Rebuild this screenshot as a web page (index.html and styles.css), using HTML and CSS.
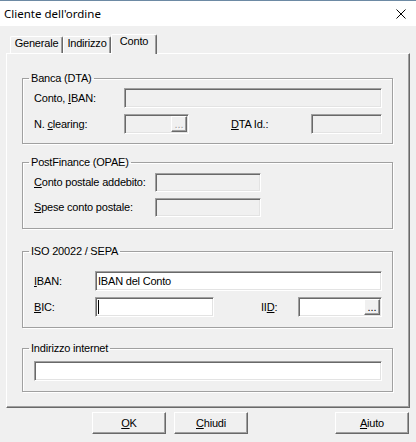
FILE: index.html
```html
<!DOCTYPE html>
<html lang="it">
<head>
<meta charset="utf-8">
<title>Cliente dell'ordine</title>
<link rel="stylesheet" href="styles.css">
</head>
<body>
<div class="window">
  <div class="titlebar">
    <span class="title">Cliente dell'ordine</span>
    <svg class="close" width="10" height="10" viewBox="0 0 10 10"><path d="M0.5 0.5 L9.5 9.5 M9.5 0.5 L0.5 9.5" stroke="#000" stroke-width="1" fill="none"/></svg>
  </div>
  <div class="tabs">
    <div class="tab t-gen">Generale</div>
    <div class="tab t-ind">Indirizzo</div>
    <div class="tab t-con active">Conto</div>
  </div>
  <div class="panel">
    <fieldset class="group g-banca">
      <legend>Banca (DTA)</legend>
      <div class="gbody b-banca">
        <div class="row">
          <span class="lbl l-banca">Conto, <u>I</u>BAN:</span>
          <div class="edit off e-iban-dta"></div>
        </div>
        <div class="row">
          <span class="lbl l-banca">N. <u>c</u>learing:</span>
          <div class="edit off e-clearing"><span class="dots off">...</span></div>
          <span class="lbl l-dta"><u>D</u>TA Id.:</span>
          <div class="edit off e-dta"></div>
        </div>
      </div>
    </fieldset>
    <fieldset class="group g-post">
      <legend>PostFinance (OPAE)</legend>
      <div class="gbody b-post">
        <div class="row">
          <span class="lbl l-post"><u>C</u>onto postale addebito:</span>
          <div class="edit off e-post"></div>
        </div>
        <div class="row">
          <span class="lbl l-post"><u>S</u>pese conto postale:</span>
          <div class="edit off e-post"></div>
        </div>
      </div>
    </fieldset>
    <fieldset class="group g-iso">
      <legend>ISO 20022 / SEPA</legend>
      <div class="gbody b-iso">
        <div class="row">
          <span class="lbl l-iso"><u>I</u>BAN:</span>
          <div class="edit text e-iban">IBAN del Conto</div>
        </div>
        <div class="row">
          <span class="lbl l-iso"><u>B</u>IC:</span>
          <div class="edit text e-bic"><span class="caret"></span></div>
          <span class="lbl l-iid">II<u>D</u>:</span>
          <div class="edit e-iid"><span class="dots">...</span></div>
        </div>
      </div>
    </fieldset>
    <fieldset class="group g-web">
      <legend>Indirizzo internet</legend>
      <div class="gbody b-web">
        <div class="row">
          <div class="edit text e-web"></div>
        </div>
      </div>
    </fieldset>
  </div>
  <div class="buttons">
    <div class="btn"><span><u>O</u>K</span></div>
    <div class="btn"><span><u>C</u>hiudi</span></div>
    <div class="btn help"><span><u>A</u>iuto</span></div>
  </div>
</div>
</body>
</html>
```
FILE: styles.css
```css
* { box-sizing: border-box; }
html, body { margin: 0; padding: 0; }
body {
  background: #f0f0f0;
  font-family: "Liberation Sans", Arial, sans-serif;
  font-size: 11px;
  line-height: 13px;
  letter-spacing: -0.2px;
  color: #000;
}
u { text-decoration: underline; text-underline-offset: 1px; }

.window { width: 416px; height: 442px; background: #f0f0f0; overflow: hidden; }

.titlebar {
  height: 26px;
  border-top: 1px solid #6d8aa4;
  background: #fff;
  display: flex;
  align-items: center;
  justify-content: space-between;
}
.title {
  font-family: "Noto Sans", "Open Sans", sans-serif;
  font-size: 11.5px;
  letter-spacing: 0;
  line-height: 16px;
  padding-left: 4px;
}
.close { display: block; margin-right: 10px; }

/* tabs */
.tabs {
  display: flex;
  align-items: flex-end;
  height: 19px;
  margin: 8px 0 0 10px;
}
.tab {
  height: 17px;
  line-height: 13px;
  text-align: center;
  border-top: 1px solid #fff;
  border-left: 1px solid #fff;
  border-right: 1px solid #696969;
  box-shadow: inset -1px 0 0 #a0a0a0;
  border-radius: 2px 2px 0 0;
  background: #f0f0f0;
}
.t-gen { width: 53px; }
.t-ind { width: 48px; }
.t-con { width: 46px; }
.tab.active {
  height: 20px;
  margin-bottom: -1px;
  position: relative;
  z-index: 1;
}

/* panel */
.panel {
  margin-left: 6px;
  width: 404px;
  height: 355px;
  border-top: 1px solid #fff;
  border-left: 1px solid #fff;
  border-right: 1px solid #696969;
  border-bottom: 1px solid #696969;
  box-shadow: inset -1px -1px 0 #a0a0a0;
  padding: 18px 0 0 15px;
}

.group {
  margin: 0;
  padding: 0;
  width: 371px;
  min-width: 0;
  border: 1px solid #a0a0a0;
  box-shadow: inset 1px 1px 0 #fff, 1px 1px 0 #fff;
}
.group legend {
  margin-left: 6px;
  padding: 0 2px;
  line-height: 13px;
  height: 13px;
}
.g-banca { height: 72px; }
.g-post { height: 73px; margin-top: 12px; }
.g-iso { height: 83px; margin-top: 16px; }
.g-web { height: 50px; margin-top: 14px; }

.gbody { display: flex; flex-direction: column; padding-left: 11px; }
.b-banca { padding-top: 3px; gap: 6px; }
.b-post { padding-top: 4px; gap: 6px; }
.b-iso { padding-top: 13px; gap: 6px; }
.b-web { padding-top: 6px; }

.row { display: flex; align-items: center; }
.lbl { flex: none; white-space: nowrap; }
.l-banca { width: 90px; }
.l-dta { width: 80px; margin-left: 42px; }
.l-post { width: 121px; }
.l-iso { width: 61px; }
.l-iid { width: 37px; margin-left: 47px; }

.edit {
  flex: none;
  height: 20px;
  border: 1px solid;
  border-color: #a0a0a0 #fff #fff #a0a0a0;
  box-shadow: inset 1px 1px 0 #696969, inset -1px -1px 0 #e3e3e3;
  background: #fff;
  padding: 1px;
  display: flex;
  align-items: center;
  justify-content: flex-end;
}
.edit.off { background: #f0f0f0; }
.edit.text { justify-content: flex-start; padding-left: 2px; }
.e-iban-dta { width: 258px; }
.e-clearing { width: 65px; }
.e-dta { width: 71px; }
.e-post { width: 106px; height: 19px; }
.e-iban { width: 287px; }
.e-bic { width: 119px; padding-left: 1px; }
.e-iid { width: 84px; }
.e-web { width: 348px; }

.caret { display: block; width: 1px; height: 14px; background: #000; }

.dots {
  display: block;
  width: 16px;
  height: 16px;
  border: 1px solid;
  border-color: #fff #696969 #696969 #fff;
  box-shadow: inset -1px -1px 0 #a0a0a0;
  background: #f0f0f0;
  text-align: center;
  line-height: 14px;
  letter-spacing: 0;
  color: #000;
}
.dots.off { color: #a0a0a0; text-shadow: 1px 1px 0 #fff; }

/* buttons */
.buttons {
  display: flex;
  gap: 8px;
  margin-top: 4px;
  padding: 0 7px 0 92px;
}
.btn {
  width: 74px;
  height: 22px;
  border: 1px solid;
  border-color: #fff #696969 #696969 #fff;
  box-shadow: inset -1px -1px 0 #a0a0a0;
  background: #f0f0f0;
  display: flex;
  align-items: center;
  justify-content: center;
}
.btn.help { margin-left: auto; }
```
